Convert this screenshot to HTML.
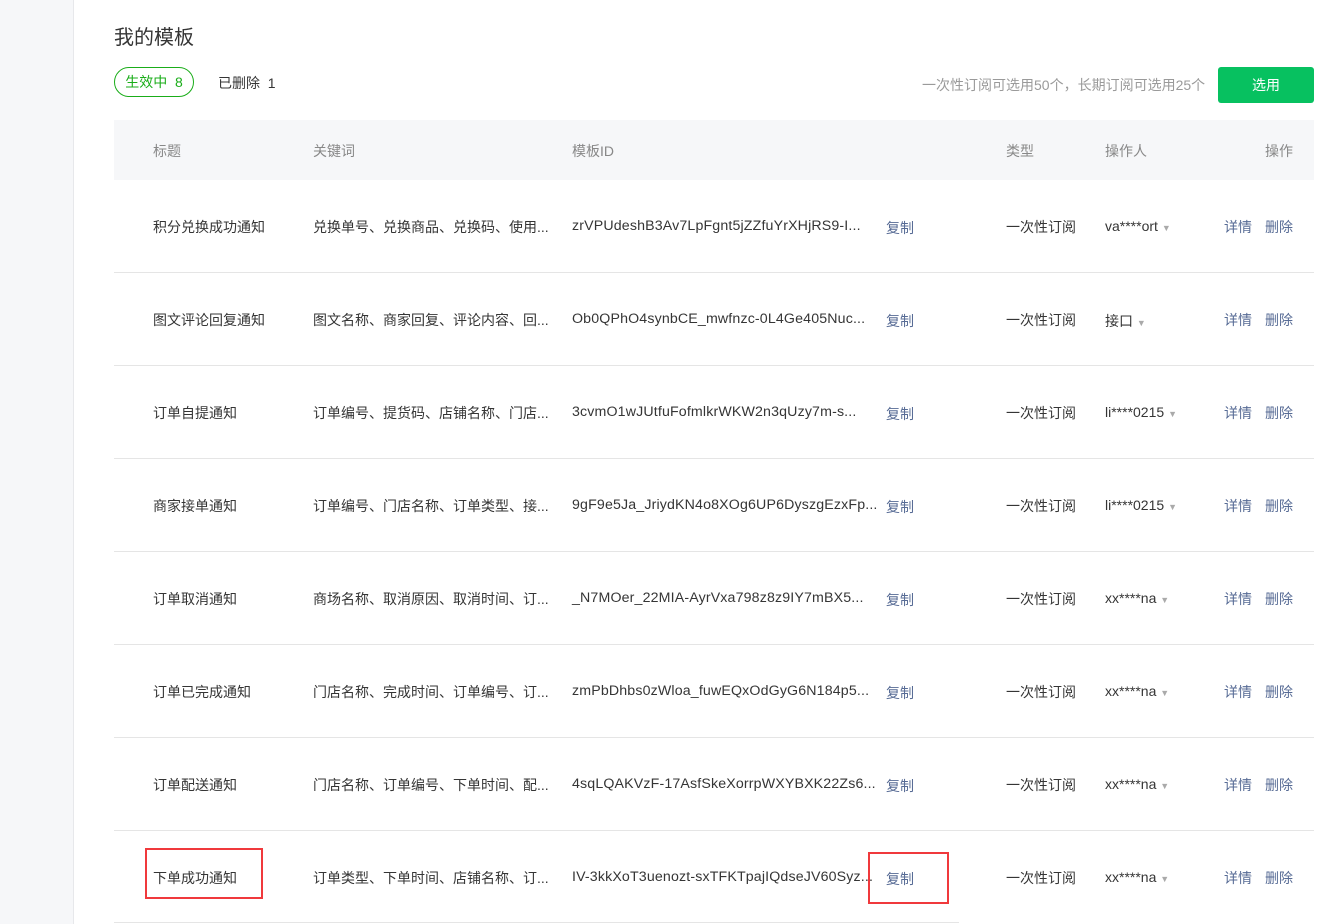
<!DOCTYPE html>
<html><head><meta charset="utf-8"><style>
body{margin:0;width:1337px;height:924px;overflow:hidden;background:#fff;font-family:"Liberation Sans","Noto Sans CJK SC",sans-serif;color:#353535;position:relative}
.side{position:absolute;left:0;top:0;width:73px;height:924px;background:#f6f7f9;border-right:1px solid #e7e8eb}
.t{position:absolute;white-space:nowrap}
h1{position:absolute;left:114px;top:21px;margin:0;font-size:20px;font-weight:normal;color:#353535}
.tab{position:absolute;left:114px;top:67px;width:80px;height:30px;border:1px solid #1aad19;border-radius:16px;box-sizing:border-box;color:#1aad19;font-size:14px;text-align:center;line-height:28px}
.btn{position:absolute;left:1218px;top:67px;width:96px;height:36px;background:#07c160;border-radius:3px;color:#fff;font-size:14px;text-align:center;line-height:36px}
.hdr{position:absolute;left:114px;top:120px;width:1200px;height:60px;background:#f6f7f9}
.hdr span{position:absolute;top:21px;font-size:14px;color:#888}
.row{position:absolute;left:114px;width:1200px;height:93px;border-bottom:1px solid #e5e5e5;font-size:14px}
.row span{position:absolute;top:37px;white-space:nowrap}
.row span.id{top:38px;font-size:14.2px;letter-spacing:0.15px}
.row span.op{top:38px}
.lk{color:#576b95}
.ar{color:#aaa;font-size:9px;font-style:normal}
.red{position:absolute;border:2px solid #f0393c;box-sizing:border-box}
</style></head><body>
<div class="side"></div>
<h1>我的模板</h1>
<div class="tab">生效中&nbsp; 8</div>
<div class="t" style="left:218px;top:73px;font-size:14px">已删除&nbsp; 1</div>
<div class="t" style="left:922px;top:75px;font-size:14px;color:#9a9a9a">一次性订阅可选用50个，长期订阅可选用25个</div>
<div class="btn">选用</div>
<div class="hdr"><span style="left:39px">标题</span><span style="left:199px">关键词</span><span style="left:458px">模板ID</span><span style="left:892px">类型</span><span style="left:991px">操作人</span><span style="left:1151px">操作</span></div>
<div class="row" style="top:180px;height:92px"><span style="left:39px">积分兑换成功通知</span><span style="left:199px">兑换单号、兑换商品、兑换码、使用...</span><span class="id" style="left:458px">zrVPUdeshB3Av7LpFgnt5jZZfuYrXHjRS9-I...</span><span class="lk" style="left:772px;top:38px">复制</span><span style="left:892px">一次性订阅</span><span class="op" style="left:991px">va****ort <i class="ar">▼</i></span><span class="lk" style="left:1110px">详情</span><span class="lk" style="left:1151px">删除</span></div>
<div class="row" style="top:273px;height:92px"><span style="left:39px">图文评论回复通知</span><span style="left:199px">图文名称、商家回复、评论内容、回...</span><span class="id" style="left:458px">Ob0QPhO4synbCE_mwfnzc-0L4Ge405Nuc...</span><span class="lk" style="left:772px;top:38px">复制</span><span style="left:892px">一次性订阅</span><span class="op" style="left:991px">接口 <i class="ar">▼</i></span><span class="lk" style="left:1110px">详情</span><span class="lk" style="left:1151px">删除</span></div>
<div class="row" style="top:366px;height:92px"><span style="left:39px">订单自提通知</span><span style="left:199px">订单编号、提货码、店铺名称、门店...</span><span class="id" style="left:458px">3cvmO1wJUtfuFofmlkrWKW2n3qUzy7m-s...</span><span class="lk" style="left:772px;top:38px">复制</span><span style="left:892px">一次性订阅</span><span class="op" style="left:991px">li****0215 <i class="ar">▼</i></span><span class="lk" style="left:1110px">详情</span><span class="lk" style="left:1151px">删除</span></div>
<div class="row" style="top:459px;height:92px"><span style="left:39px">商家接单通知</span><span style="left:199px">订单编号、门店名称、订单类型、接...</span><span class="id" style="left:458px">9gF9e5Ja_JriydKN4o8XOg6UP6DyszgEzxFp...</span><span class="lk" style="left:772px;top:38px">复制</span><span style="left:892px">一次性订阅</span><span class="op" style="left:991px">li****0215 <i class="ar">▼</i></span><span class="lk" style="left:1110px">详情</span><span class="lk" style="left:1151px">删除</span></div>
<div class="row" style="top:552px;height:92px"><span style="left:39px">订单取消通知</span><span style="left:199px">商场名称、取消原因、取消时间、订...</span><span class="id" style="left:458px">_N7MOer_22MIA-AyrVxa798z8z9IY7mBX5...</span><span class="lk" style="left:772px;top:38px">复制</span><span style="left:892px">一次性订阅</span><span class="op" style="left:991px">xx****na <i class="ar">▼</i></span><span class="lk" style="left:1110px">详情</span><span class="lk" style="left:1151px">删除</span></div>
<div class="row" style="top:645px;height:92px"><span style="left:39px">订单已完成通知</span><span style="left:199px">门店名称、完成时间、订单编号、订...</span><span class="id" style="left:458px">zmPbDhbs0zWloa_fuwEQxOdGyG6N184p5...</span><span class="lk" style="left:772px;top:38px">复制</span><span style="left:892px">一次性订阅</span><span class="op" style="left:991px">xx****na <i class="ar">▼</i></span><span class="lk" style="left:1110px">详情</span><span class="lk" style="left:1151px">删除</span></div>
<div class="row" style="top:738px;height:92px"><span style="left:39px">订单配送通知</span><span style="left:199px">门店名称、订单编号、下单时间、配...</span><span class="id" style="left:458px">4sqLQAKVzF-17AsfSkeXorrpWXYBXK22Zs6...</span><span class="lk" style="left:772px;top:38px">复制</span><span style="left:892px">一次性订阅</span><span class="op" style="left:991px">xx****na <i class="ar">▼</i></span><span class="lk" style="left:1110px">详情</span><span class="lk" style="left:1151px">删除</span></div>
<div class="row" style="top:831px;height:92px;border-bottom:none"><span style="left:39px">下单成功通知</span><span style="left:199px">订单类型、下单时间、店铺名称、订...</span><span class="id" style="left:458px">IV-3kkXoT3uenozt-sxTFKTpajIQdseJV60Syz...</span><span class="lk" style="left:772px;top:38px">复制</span><span style="left:892px">一次性订阅</span><span class="op" style="left:991px">xx****na <i class="ar">▼</i></span><span class="lk" style="left:1110px">详情</span><span class="lk" style="left:1151px">删除</span></div>
<div style="position:absolute;left:114px;top:922px;width:845px;height:1px;background:#e5e5e5"></div>
<div class="red" style="left:145px;top:848px;width:118px;height:51px"></div>
<div class="red" style="left:868px;top:852px;width:81px;height:52px"></div>
</body></html>
